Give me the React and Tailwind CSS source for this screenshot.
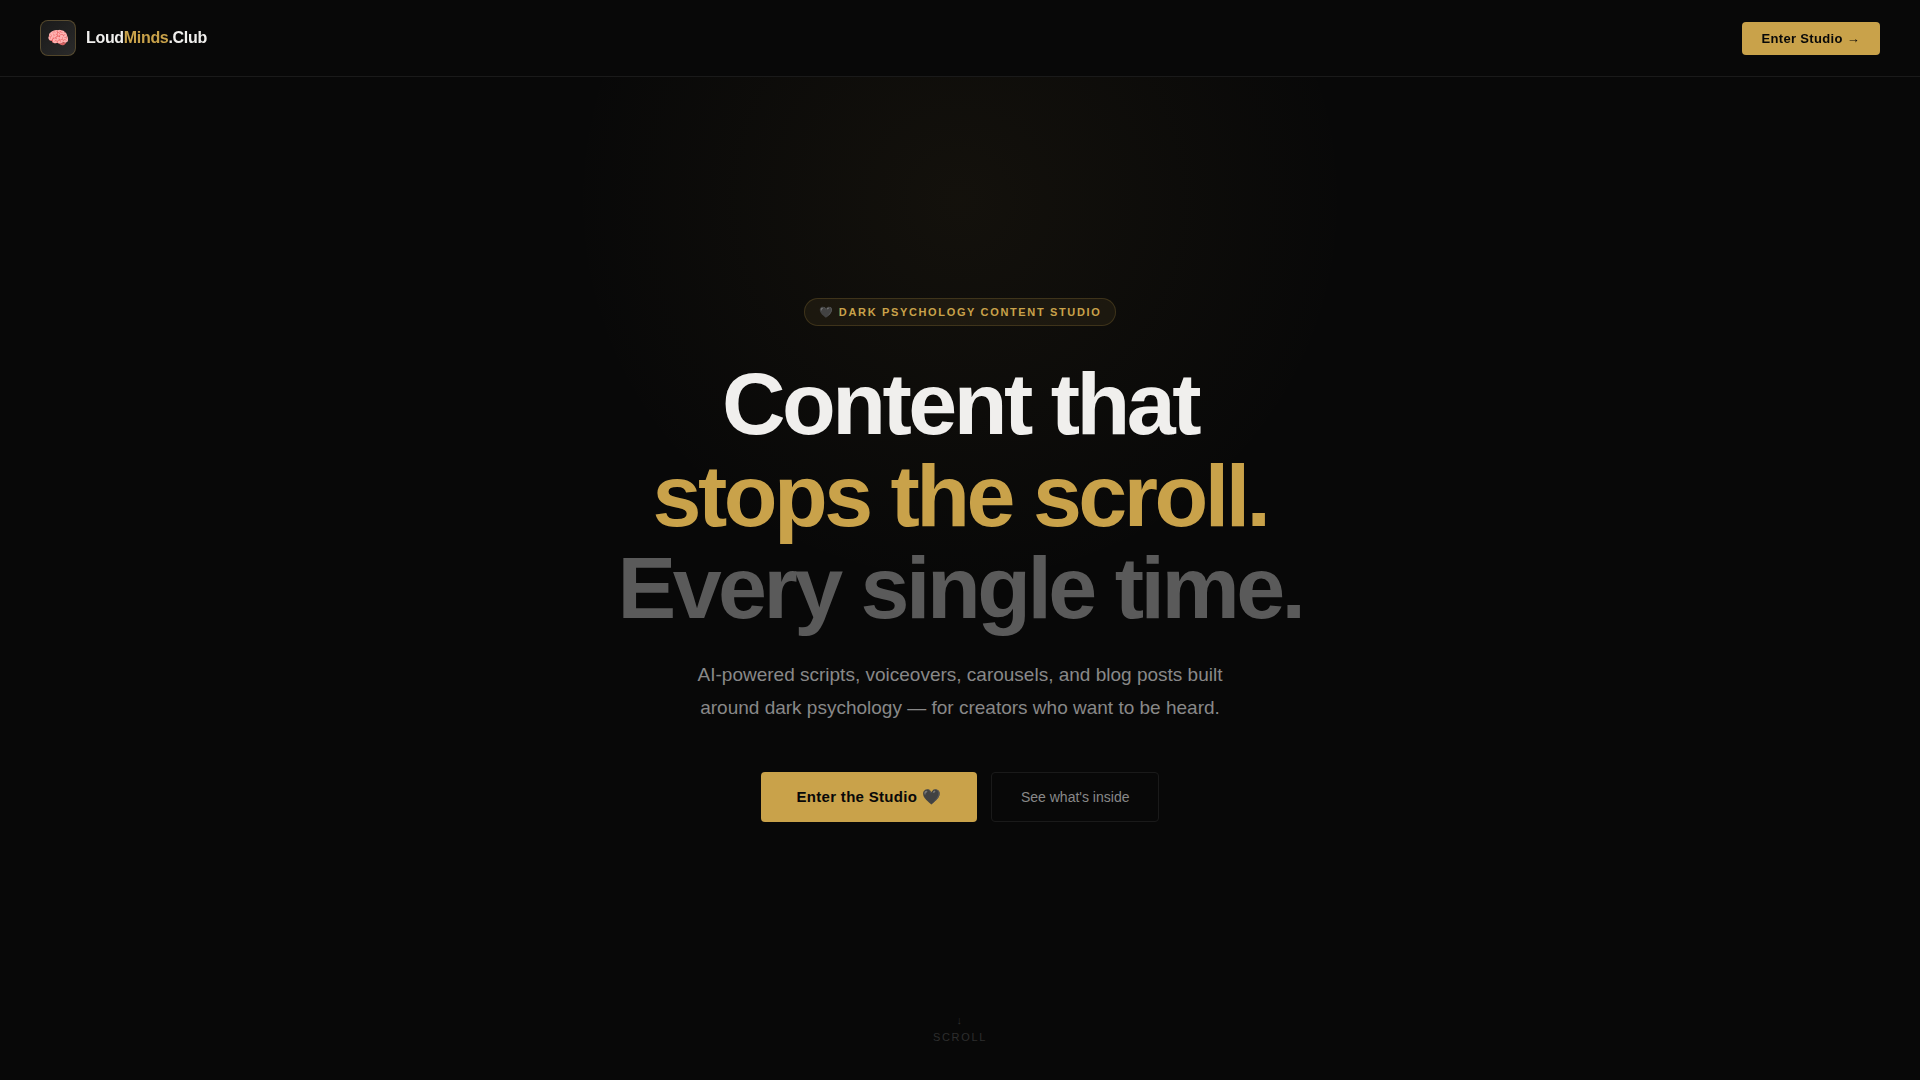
import React from "react";

function Logo() {
  return (
    <a href="#top" className="flex items-center gap-2.5">
      <span className="flex h-9 w-9 items-center justify-center rounded-lg border border-[#c9a24a]/30 bg-linear-to-br from-[#1a1a1a] to-[#2a2a2a] text-lg">🧠</span>
      <span className="text-base font-bold tracking-[-0.02em] text-[#f0efed]">
        Loud<span className="text-[#c9a24a]">Minds</span>.Club
      </span>
    </a>
  );
}

function Header() {
  return (
    <header className="fixed inset-x-0 top-0 z-10 flex items-center justify-between border-b border-[#1a1a1a] bg-[#080808]/95 px-10 py-5 backdrop-blur-md">
      <Logo />
      <button className="rounded-sm bg-[#c9a24a] px-5 py-2 text-[13px] leading-[17px] font-bold tracking-[0.025em] text-[#080808]">
        Enter Studio →
      </button>
    </header>
  );
}

export default function App() {
  return (
    <div id="top" className="min-h-screen bg-[#080808] font-['Liberation_Sans',Arial,sans-serif] text-[#f0efed]">
      <Header />
      <main className="relative flex min-h-screen flex-col items-center justify-center overflow-hidden px-10 pt-30 pb-20 text-center">
        {/* gold glow behind the hero */}
        <div className="pointer-events-none absolute -top-[200px] left-1/2 h-[800px] w-[800px] -translate-x-1/2 bg-[radial-gradient(circle,rgba(201,162,74,0.06)_0%,transparent_69%)]" />

        <div className="relative mb-8 rounded-[20px] border border-[#c9a24a]/20 bg-[#c9a24a]/8 px-3.5 py-1.5 text-[11px] leading-[14px] font-bold tracking-[0.15em] text-[#c9a24a] uppercase">
          🖤 Dark Psychology Content Studio
        </div>

        <h1 className="relative mb-6 text-[88px] leading-[92px] font-bold tracking-[-0.04em]">
          Content that
          <br />
          <span className="text-[#c9a24a]">stops the scroll.</span>
          <br />
          <span className="text-[#5a5a5a]">Every single time.</span>
        </h1>

        <p className="relative mb-12 max-w-[560px] text-[19px] leading-[33px] text-[#888888]">
          AI-powered scripts, voiceovers, carousels, and blog posts built around dark psychology — for creators who want to be heard.
        </p>

        <div className="relative flex flex-wrap justify-center gap-3.5">
          <button className="rounded-sm bg-[#c9a24a] px-9 py-4 text-[15px] leading-[18px] font-bold tracking-[0.02em] text-[#080808]">
            Enter the Studio 🖤
          </button>
          <a href="#inside" className="rounded-sm border border-[#1a1a1a] px-[29px] py-4 text-sm leading-4 text-[#888888]">
            See what's inside
          </a>
        </div>

        <div className="absolute bottom-9 left-1/2 flex -translate-x-1/2 flex-col items-center gap-1 text-[11px] leading-[13px] tracking-[0.15em] text-[#2e2e2e]">
          <span>↓</span>
          <span>SCROLL</span>
        </div>
      </main>
    </div>
  );
}
